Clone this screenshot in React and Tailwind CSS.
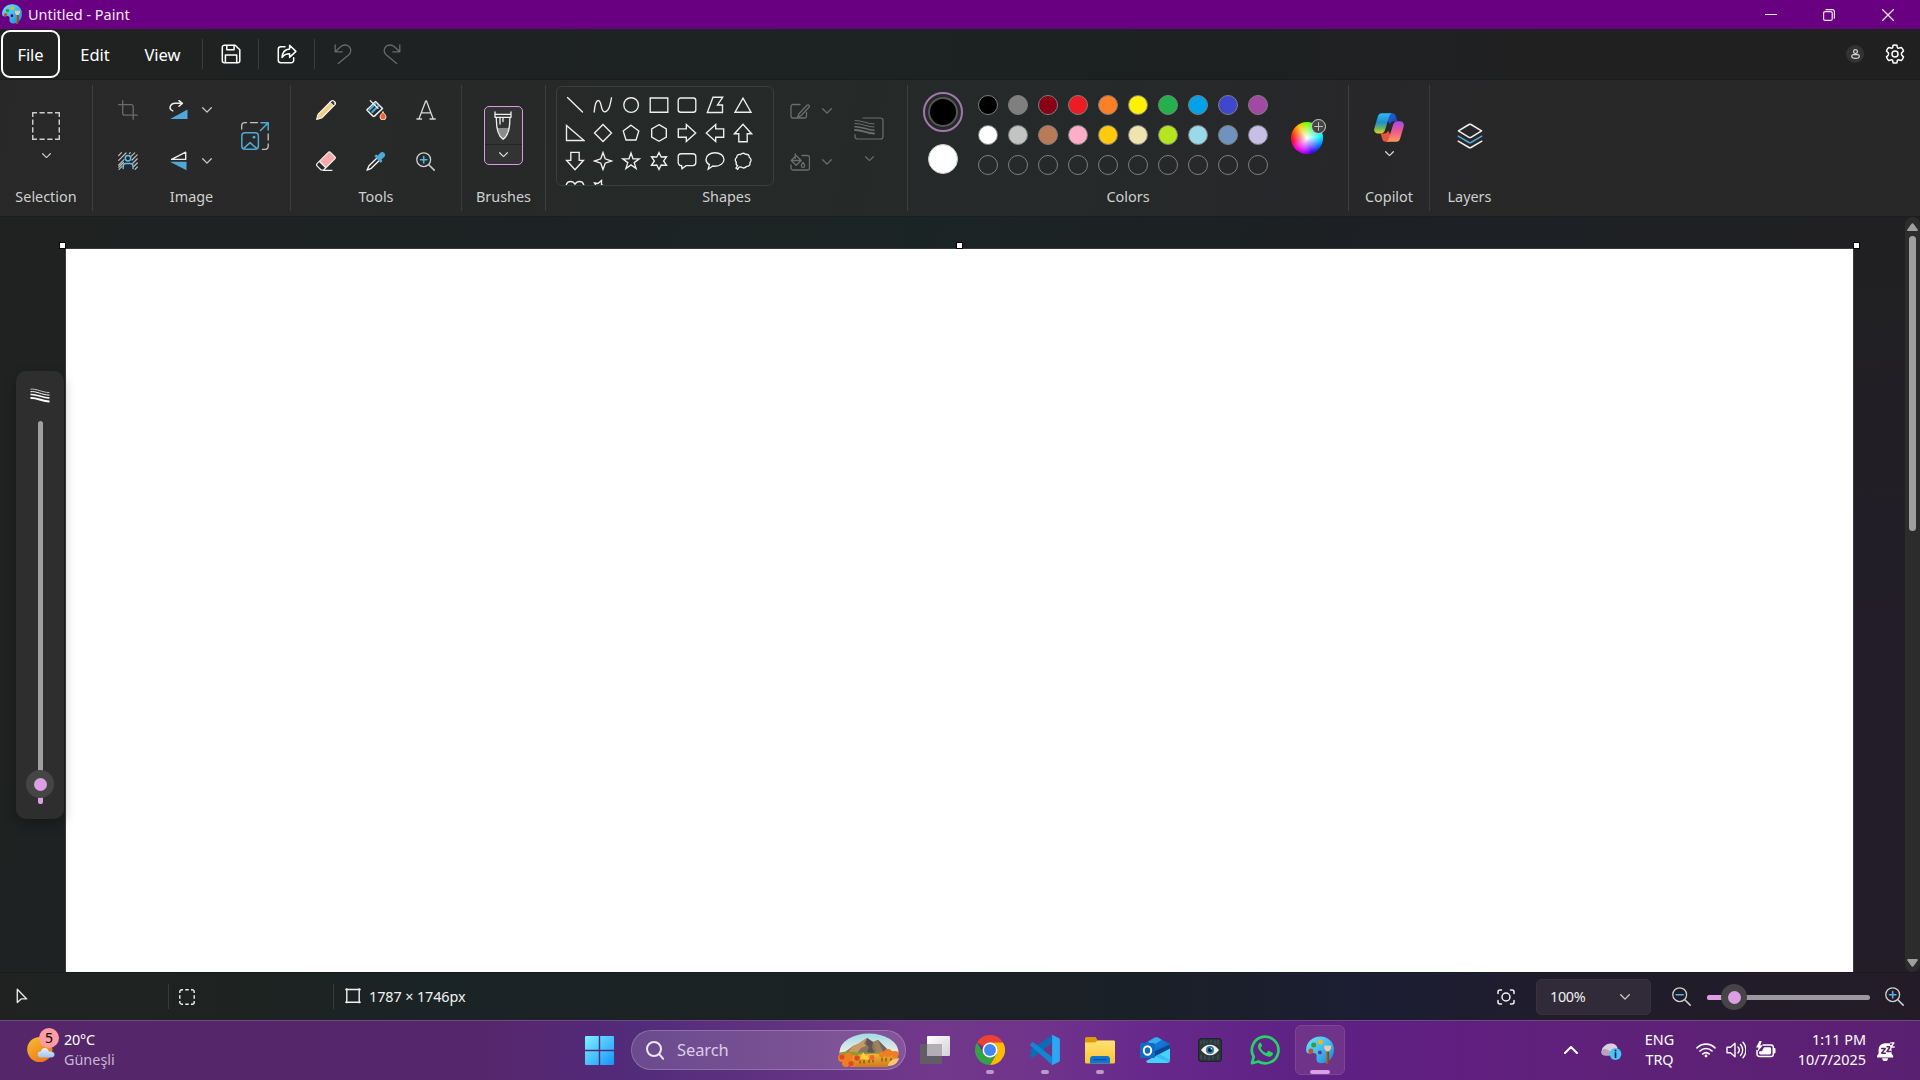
import React from "react";

const Svg = ({ w = 20, h = w, vb, className = "", children, ...p }) => (
  <svg width={w} height={h} viewBox={vb || `0 0 ${w} ${h}`} fill="none" stroke="currentColor" strokeWidth="1.3" strokeLinecap="round" strokeLinejoin="round" className={"block shrink-0 " + className} {...p}>
    {children}
  </svg>
);

const BLUE = "#4fa9d8";

const Chevron = ({ w = 10, className = "" }) => (
  <Svg w={w} h={w * 0.6} vb="0 0 10 6" className={className}><path d="M.7 .8 5 5.1 9.3 .8" /></Svg>
);

const PaintLogo = ({ w }) => (
  <Svg w={w} vb="0 0 28 28" stroke="none">
    <defs>
      <linearGradient id={"pal" + w} x1="0" y1="0" x2="1" y2="1"><stop offset="0" stopColor="#6fe6fc" /><stop offset=".5" stopColor="#3fbdf0" /><stop offset="1" stopColor="#1c7fd8" /></linearGradient>
      <linearGradient id={"brh" + w} x1="0" y1="0" x2="1" y2="0"><stop offset="0" stopColor="#b96a21" /><stop offset="1" stopColor="#7c3f10" /></linearGradient>
    </defs>
    <path d="M14.500 .5C6.500 .5 .3 6.300 .1 13.700c-.1 3.300 2.200 4.300 5 3.600 3.500-.9 6.200-.2 5.500 3.500-.7 3.800.6 6.500 4.600 6.500C22.500 27.300 28 21.500 28 13.500 28 6 22 .5 14.500.5Zm-.6 14a2 2 0 1 1 0 4 2 2 0 0 1 0-4Z" fill={"url(#pal" + w + ")"} fillRule="evenodd" />
    <circle cx="4.900" cy="15" r="2.500" fill="#c8512b" /><circle cx="7.700" cy="9" r="2.500" fill="#3f9c35" /><circle cx="14.500" cy="6" r="2.500" fill="#f4b51c" />
    <path d="M20.200 15h2.900v12.200a1.450 1.450 0 0 1-2.900 0Z" fill={"url(#brh" + w + ")"} />
    <path d="M18.200 9.500h6.900v2.900l-1.600 2.200h-3.700l-1.600-2.200Z" fill="#e8cba0" /><path d="M19.800 13.300h3.700v2h-3.700Z" fill="#cfd3d8" />
  </Svg>
);

const Save = () => (
  <Svg w={20} strokeWidth="1.500"><path d="M3.500 1.200h10.700l4.600 4.500v11a2 2 0 0 1-2 2H3.300a2 2 0 0 1-2-2V3.300a2 2 0 0 1 2.200-2.100Z" /><path d="M5.800 1.500v4.300h7.300V1.500M4.400 18.500v-7.400h11.300v7.400" /></Svg>
);
const Share = () => (
  <Svg w={20} strokeWidth="1.500"><path d="M8 2.800H3.800a2.500 2.500 0 0 0-2.500 2.500v10.900a2.500 2.500 0 0 0 2.500 2.500h10.400a2.500 2.500 0 0 0 2.500-2.500v-2.500" /><path d="M12.600 1.300v3.600C8 5.200 5.300 8.200 5 13.600c1.900-2.700 4.300-3.800 7.600-3.800v3.600l6.300-6Z" /></Svg>
);
const Undo = ({ className = "" }) => (
  <Svg w={18} h={20} className={className} strokeWidth="1.300"><path d="M1.200 .8v7h7M1.500 7.500 6 3.200c2.800-2.700 6.700-2.900 9-.7 2.400 2.300 2.500 5.600-.1 8.200L4.300 19.500" /></Svg>
);
const Gear = () => (
  <Svg w={20} strokeWidth="1.500">
    <circle cx="10" cy="10" r="3" />
    <path d="M8.100 1.200Q10 .7 11.900 1.200L12.300 3.300Q12.800 4.300 14 4.100L16.400 3.500Q17.900 5 18.500 7L16.800 8.700Q16.100 10 16.800 11.200L18.500 12.900Q17.900 15 16.400 16.500L14 15.900Q12.800 15.700 12.300 16.700L11.900 18.800Q10 19.300 8.100 18.800L7.700 16.700Q7.200 15.700 6 15.900L3.600 16.500Q2.100 15 1.500 12.900L3.200 11.200Q3.900 10 3.200 8.700L1.500 7Q2.100 5 3.600 3.500L6 4.100Q7.200 4.300 7.700 3.300Z" />
  </Svg>
);

const Crop = () => <Svg w={20} className="text-[#6b6b6b]"><path d="M4.700 .7v12.500a2 2 0 0 0 2 2h12.600M.7 4.700h12.500a2 2 0 0 1 2 2v12.600" /></Svg>;
const Rotate = () => (
  <Svg w={20} className="text-[#ececec]"><path d="M1 7.800C1.300 5 3.500 3.300 6.500 3.300h6.300M10 .6l3.300 2.800L10 6.300M1 8c.3 1.500 1.300 2.500 2.800 2.900" strokeWidth="1.500" /><path d="M18.500 9.500v9.500H1.200Z" fill={BLUE} stroke="none" /></Svg>
);
const Flip = () => (
  <Svg w={20} className="text-[#ececec]"><path d="M16.700 1.200v7.200H2.600Z" strokeWidth="1.400" /><path d="M17.500 10.700v8.600L.8 10.700Z" fill={BLUE} stroke="none" /></Svg>
);
const RemoveBg = () => (
  <Svg w={20} className="text-[#bdbdbd]" strokeWidth="1.200">
    <path d="M.7 4.500 3.500 1.700M.7 9.300 8 2M.7 14 6 8.700M1 18.300 4 15.300M.7 16.200 5.500 11.500M11.500 2.500 12.300 1.700M12.800 5.700 16.700 1.800M14 9 19.200 3.800M14.800 12.200 19.300 7.800M15.700 15.500 19.300 12M17 18.300 19.300 16" />
    <circle cx="10" cy="7.300" r="2.700" stroke="#62bdea" strokeWidth="1.500" /><path d="M5.200 17.500v-2.300a2.600 2.600 0 0 1 2.600-2.600h4.600a2.600 2.600 0 0 1 2.600 2.600v2.300" stroke="#62bdea" strokeWidth="1.500" />
  </Svg>
);
const Resize = () => (
  <Svg w={28} className="text-[#c4c4c4]" strokeWidth="1.300">
    <path d="M.7 7V3.500A2.800 2.800 0 0 1 3.500.7h2M9.500.7h7M27.200 12v6M27.200 22v2.500a2.800 2.800 0 0 1-2.800 2.800h-3" />
    <g stroke={BLUE} strokeWidth="1.500"><path d="M20 .8h7.200v7.200M27 1 19.500 8.500" /><rect x=".8" y="10.800" width="16.600" height="16.400" rx="3.200" /><path d="m3.300 25.900 5.800-5.300 5.900 5.300" /></g><circle cx="13" cy="15.200" r="1.400" fill={BLUE} stroke="none" />
  </Svg>
);
const Pencil = () => (
  <Svg w={20} className="text-[#f4f4f4]"><path d="M.8 19.200 2.200 14 14.200 2 18 5.800 6 17.800Z" fill="#f0d080" stroke="none" /><path d="M.6 19.400 2 14.300 14.800 1.500a2.600 2.600 0 0 1 3.700 3.700L5.700 18Z" strokeWidth="1.100" /><path d="m14 2.200 3.800 3.800 1-1.200V2L17 .8Z" fill="#3b3b3b" stroke="#fff" strokeWidth=".9" /></Svg>
);
const Bucket = () => (
  <Svg w={21} h={20} className="text-[#f1f1f1]"><path d="m3.500 7.500 6-6 7 7-8 7.600a1 1 0 0 1-1.500 0L1.300 10.500a1 1 0 0 1 0-1.200Z" strokeWidth="1.500" /><path d="m3.700 9.500 6-6M6.300 12l6-6" stroke={BLUE} strokeWidth="2.300" /><path d="M4.300 .7 12 8.300" strokeWidth="1.200" /><path d="M17 12c1.500 2 3 3.300 3 4.900a3 3 0 0 1-6 0c0-1.600 1.500-2.900 3-4.900Z" fill="#f4622f" stroke="#fff" strokeWidth=".8" /></Svg>
);
const LetterA = () => <Svg w={20} className="text-[#d6d6d6]" strokeWidth="1.300"><path d="M2.900 19 9.700 1h.8L17.200 19M.9 19h4.600M14 19h5.200M5.300 12.800h9.500" /></Svg>;
const Eraser = () => (
  <Svg w={20} className="text-[#f1f1f1]"><path d="M1 12.700 12.300 1.300a1.500 1.500 0 0 1 2.200 0l4.300 4.400a1.500 1.500 0 0 1 0 2.100L7.600 19H5.100L1 14.900a1.500 1.500 0 0 1 0-2.200Z" fill="#f9aaa8" stroke="none" /><path d="M3.200 10.600 9.400 16.900 7.600 19H5.100L1 14.900a1.500 1.500 0 0 1 0-2.200Z" fill="#252626" stroke="none" /><path d="M1 12.700 12.300 1.300a1.500 1.500 0 0 1 2.200 0l4.300 4.400a1.500 1.500 0 0 1 0 2.100L7.600 19H5.100L1 14.900a1.500 1.500 0 0 1 0-2.200ZM3.500 10.500l6.200 6.200M7 19.300h9" strokeWidth="1.200" /></Svg>
);
const Dropper = () => (
  <Svg w={20} className="text-[#f1f1f1]"><path d="M10.500 7.500 3 14.800 1 19.200l4.300-1.900 7.700-7.500" strokeWidth="1.400" /><path d="m8.300 5 2-1.500 1.500 1L14.600 1.400a3 3 0 0 1 4.100 4.100L15.500 8.400l.9 1.600-1.600 1.900Z" fill={BLUE} stroke="none" /></Svg>
);
const Magnifier = ({ sign = "plus", w = 19 }) => (
  <Svg w={w} vb="0 0 19 19" className="text-[#cfcfcf]"><circle cx="7.700" cy="7.700" r="6.900" /><path d="m12.800 12.800 5.400 5.300" strokeWidth="1.500" /><path d={sign === "plus" ? "M7.700 4.500v6.400M4.500 7.700h6.400" : "M4.200 7.700h7"} stroke="#55b3e3" strokeWidth="1.600" /></Svg>
);
const Brush = () => (
  <Svg w={18} h={30} className="text-[#f0f0f0]" strokeWidth="1.300">
    <path d="M3.300 17h11.700c-.8 4.800-2.600 8.800-5.800 10.800-3.300-2-5.100-6-5.900-10.800Z" fill="#8b8b8b" stroke="none" />
    <path d="M1 1v5.300h16V1M1 3.300h16M2.400 6.300c-.3 10.500 1.300 18.200 6.700 22 5.400-3.800 7-11.500 6.700-22M6 6.500v6.500M9 6.500v4" />
  </Svg>
);
const Strokes = ({ className = "" }) => (
  <Svg w={20} h={15} className={className} strokeLinecap="butt"><g><path d="M.5 1.200C6 .3 12 4.500 19.500 4.600" strokeWidth=".7" /><path d="M.5 3.700C6 2.800 12 7 19.500 7.100" strokeWidth="1" /><path d="M.5 6.500c5.500-.9 11.500 3.300 19 3.400" strokeWidth="1.500" /><path d="M.5 10c5.500-.9 11.500 3.300 19 3.400" strokeWidth="2" /></g></Svg>
);

const SHAPES = [
  "M2.500 2.500 17.500 17",
  "M1.200 17C2 8 3.500 5.500 5.200 5.500c4 0 2 11.300 6.300 11.300 4.300 0 5.500-6 7-14",
  "M2.800 10a7.300 7.300 0 1 0 14.600 0 7.300 7.300 0 1 0-14.600 0Z",
  "M1.200 3h17.600v14.200H1.200Z",
  "M3.700 3h12.600a2.500 2.500 0 0 1 2.500 2.500v9.200a2.500 2.500 0 0 1-2.500 2.500H3.700a2.500 2.500 0 0 1-2.500-2.500V5.500A2.500 2.500 0 0 1 3.700 3Z",
  "M8 2.200h9.700L12.500 10h5v7.500H2.300Z",
  "M10 3.200 18 17.200H2Z",
  "M1.500 2.500v15H19Z",
  "M10 1.500 18.500 10 10 18.500 1.500 10Z",
  "M10 2.200 17.800 8 15 17H5L2.200 8Z",
  "M10 1.700 17.300 5.800v8.400L10 18.300 2.700 14.200V5.800Z",
  "M1.300 5.800h8V1.500L18.700 10l-9.400 8.500v-4.300h-8Z",
  "M18.700 5.800h-8V1.500L1.300 10l9.400 8.500v-4.300h8Z",
  "M5.800 18.700v-8H1.500L10 1.300l8.500 9.400h-4.300v8Z",
  "M5.800 1.300v8H1.500L10 18.700l8.500-9.400h-4.300v-8Z",
  "M10 1.500 12.200 7.800 18.500 10 12.200 12.200 10 18.500 7.800 12.200 1.500 10 7.800 7.800Z",
  "M10 2 12 7.800 18.200 7.900 13.200 11.600 15.100 17.500 10 13.900 4.900 17.500 6.800 11.600 1.800 7.900 8 7.800Z",
  "M10 1.500 12.200 6 17.500 5.800 14.600 10 17.500 14.300 12.200 14 10 18.500 7.800 14 2.500 14.300 5.400 10 2.500 5.800 7.800 6Z",
  "M4.200 2.700h11.600a3 3 0 0 1 3 3v5.900a3 3 0 0 1-3 3H9L5 17.800l-.4-3.200a3 3 0 0 1-3.400-3V5.700a3 3 0 0 1 3-3Z",
  "M10 1.700c5 0 9 2.900 9 6.700s-4 6.800-9 6.800c-.8 0-1.500 0-2.200-.2L3.200 18.200l1.200-4.500C2.300 12.500 1 10.600 1 8.400c0-3.800 4-6.700 9-6.700Z",
  "M7.500 3.500Q10 1 12.500 3.300 16.300 3 16.300 6.300 19.500 8.800 17 11.500 17.500 15.300 13.800 15.300 11 18.300 8 16L6 16.200 4.700 18.300 3 17 4.500 14.800Q2.500 13.500 3.300 11.300 1 8.500 3.700 6.500 3.800 3 7.500 3.500Z",
  "M10 18 2.700 11C-.5 7 1.700 2.500 5.400 2.500c2 0 3.600 1 4.600 2.700 1-1.700 2.600-2.700 4.600-2.700 3.700 0 5.900 4.500 2.700 8.500Z",
  "M8.500 1.500V6L12 7l-1 3 7 8-9-5-2.500-3L6 11 1.500 4 5 4.500Z",
];

const PALETTE = [
  ["bg-[#000000]", "bg-[#7f7f7f]", "bg-[#880015]", "bg-[#ed1c24]", "bg-[#ff7f27]", "bg-[#fff200]", "bg-[#22b14c]", "bg-[#00a2e8]", "bg-[#3f48cc]", "bg-[#a349a4]"],
  ["bg-[#ffffff]", "bg-[#c3c3c3]", "bg-[#b97a57]", "bg-[#ffaec9]", "bg-[#ffc90e]", "bg-[#efe4b0]", "bg-[#b5e61d]", "bg-[#99d9ea]", "bg-[#7092be]", "bg-[#c8bfe7]"],
  Array(10).fill("bg-transparent"),
];

const Section = ({ className = "", label, children, last }) => (
  <div className={"mt-[5px] flex h-[126px] shrink-0 flex-col " + (last ? "" : "border-r border-[#3c3e3e] ") + className}>
    <div className="flex h-[102px] w-full">{children}</div>
    <div className="flex h-5 items-center justify-center text-[14.400px] leading-5 text-[#cfd0d0]">{label}</div>
  </div>
);

const Cell = ({ className = "", children }) => <div className={"flex h-[50px] shrink-0 items-center justify-center " + className}>{children}</div>;

const TitleBar = () => (
  <header className="flex h-[29px] items-center bg-[#690081] text-[#f4eaf6]">
    <div className="-mt-px ml-[2px]"><PaintLogo w={20} /></div>
    <span className="-mt-px ml-[6px] text-[14.500px] leading-5">Untitled - Paint</span>
    <div className="ml-auto flex h-[28px] items-center">
      <div className="flex w-[58px] justify-center"><Svg w={12} strokeWidth="1"><path d="M0 5.500h12" /></Svg></div>
      <div className="flex w-[58px] justify-center"><Svg w={12} strokeWidth="1.200"><rect x=".6" y="2.600" width="8.600" height="8.800" rx="1.500" /><path d="M3 .6h6.400a2 2 0 0 1 2 2v6.600" /></Svg></div>
      <div className="mr-[3px] flex w-[59px] justify-center"><Svg w={12} strokeWidth="1.200"><path d="M.5.500l11 11M11.500.500l-11 11" /></Svg></div>
    </div>
  </header>
);

const MenuBar = () => (
  <nav className="flex h-[51px] border-b border-[#1a1b1b] bg-[linear-gradient(90deg,#202221_0%,#1e2222_25%,#1c2122_55%,#202021_80%,#202020_100%)] text-white">
    <div className="ml-px mt-px flex h-12 w-[59px] items-center justify-center rounded-[9px] border-2 border-white text-[16.500px] tracking-[-0.1px]"><span className="mt-[3px]">File</span></div>
    <div className="flex w-[70px] items-center justify-center pt-[3px] text-[16.500px]">Edit</div>
    <div className="flex w-[65px] items-center justify-center pt-[3px] text-[16.500px]">View</div>
    <div className="ml-[7px] mt-[10px] flex h-[30px] items-center">
      <div className="h-full w-px bg-[#3a3c3c]" />
      <Cell className="w-[55px]"><Save /></Cell>
      <div className="h-full w-px bg-[#3a3c3c]" />
      <Cell className="w-[55px]"><Share /></Cell>
      <div className="h-full w-px bg-[#3a3c3c]" />
      <Cell className="ml-[3px] w-[49px] text-[#686a6a]"><Undo /></Cell>
      <Cell className="w-[49px] text-[#686a6a]"><Undo className="-scale-x-100" /></Cell>
    </div>
    <div className="ml-auto flex h-[50px] items-center">
      <div className="flex size-[18px] items-center justify-center rounded-full bg-[#333333] text-[#d5d5d5]"><Svg w={9} h={10} strokeWidth="1.200"><circle cx="4.500" cy="2.600" r="1.900" /><path d="M2.300 5.600h4.400a1.600 1.600 0 0 1 1.600 1.600c0 1.200-1.300 2.100-3.800 2.100S.7 8.400.7 7.200a1.600 1.600 0 0 1 1.600-1.600Z" /></Svg></div>
      <div className="ml-[21px] mr-[15px]"><Gear /></div>
    </div>
  </nav>
);

const ShapeGallery = () => (
  <div className="ml-[10px] mt-px h-[100px] w-[218px] shrink-0 overflow-hidden rounded-[6px] border border-[#3b3e3e]">
    <div className="ml-[3.500px] mt-[3.500px] grid w-[196px] grid-cols-[repeat(7,28px)] text-[#efefef]">
      {SHAPES.map((d, i) => <div key={i} className="flex size-7 items-center justify-center"><Svg w={20} strokeWidth="1.350" strokeLinejoin="miter"><path d={d} /></Svg></div>)}
    </div>
  </div>
);

const Ribbon = () => (
  <section className="flex h-[137px] border-b border-[#1c1d1d] bg-[linear-gradient(100deg,#282828_0%,#282928_14%,#262928_28%,#252a29_45%,#26292a_58%,#27272a_70%,#282828_82%)]">
    <Section className="w-[93px]" label="Selection">
      <div className="flex w-full flex-col items-center pt-[27px] text-[#cccccc]">
        <Svg w={28} strokeWidth="1.500" strokeLinecap="butt"><path d="M.7 5V.7H5M23 .7h4.300V5M27.300 23v4.300H23M5 27.300H.7V23M7.500.7h5.200M15.300.7h5.200M7.500 27.300h5.200M15.300 27.300h5.200M.7 7.500v5.200M.7 15.300v5.200M27.300 7.500v5.200M27.300 15.300v5.200" /></Svg>
        <Chevron w={9} className="mt-[13px]" />
      </div>
    </Section>
    <Section className="w-[198px]" label="Image">
      <div className="ml-[10px] grid shrink-0 grid-cols-[56px_40px_15px] text-[#c8c8c8]">
        <Cell className="w-[50px]"><Crop /></Cell><Cell><Rotate /></Cell><Cell><Chevron /></Cell>
        <Cell className="w-[50px]"><RemoveBg /></Cell><Cell><Flip /></Cell><Cell><Chevron /></Cell>
      </div>
      <div className="ml-[27px] flex h-[102px] items-center"><Resize /></div>
    </Section>
    <Section className="w-[171px]" label="Tools">
      <div className="ml-[10px] grid grid-cols-[50px_50px_49px]">
        <Cell><Pencil /></Cell><Cell><Bucket /></Cell><Cell><LetterA /></Cell>
        <Cell><Eraser /></Cell><Cell><Dropper /></Cell><Cell><Magnifier /></Cell>
      </div>
    </Section>
    <Section className="w-[84px]" label="Brushes">
      <div className="ml-[22px] mt-[21px] flex h-[59px] w-[39px] flex-col items-center rounded-[5px] border border-[#d99ae2] bg-[#323434]">
        <div className="flex h-[38px] w-full justify-center border-b border-[#222424] pr-px pt-[4px]"><Brush /></div>
        <Chevron w={9} className="mr-px mt-[7px] text-[#dddddd]" />
      </div>
    </Section>
    <Section className="w-[362px]" label="Shapes">
      <ShapeGallery />
      <div className="ml-[10px] grid shrink-0 grid-cols-[32px_22px] pt-px text-[#6c6e6e]">
        <Cell><Svg w={20} h={16}><path d="M10 1.500H3A2 2 0 0 0 1 3.500V13a2 2 0 0 0 2 2h11.500a2 2 0 0 0 2-2V9.500" /><path d="M7.500 14.500 9 10.700 17 2.300a1.400 1.400 0 0 1 2 2L11 12.700Z" /></Svg></Cell>
        <Cell><Chevron /></Cell>
        <Cell><Svg w={20} h={18}><path d="M12 2.500h5.500a2 2 0 0 1 2 2V15a2 2 0 0 1-2 2H3a2 2 0 0 1-2-2v-3" /><path d="m1.200 7.500 5-5 5 5-5 4.800ZM5.200.8v4.500M3 7.500h7M13 9.500c1.200 1.500 1.700 2.200 1.700 3.200a1.700 1.700 0 0 1-3.400 0c0-1 .5-1.700 1.700-3.200Z" /></Svg></Cell>
        <Cell><Chevron /></Cell>
      </div>
      <div className="ml-[14px] flex w-[34px] flex-col items-center pt-[32px] text-[#6c6e6e]">
        <Svg w={30} h={23} strokeWidth="1.200"><path d="M9 1h17.500A2.500 2.500 0 0 1 29 3.500v16a2.500 2.500 0 0 1-2.500 2.500h-23A2.500 2.500 0 0 1 1 19.500v-2" /><path d="M1 3.500c6-.5 12 3.500 19 3.500M1 6.500c6-.5 12 3.500 19 3.500" strokeWidth="1" /><path d="M1 9.700c6-.5 12 3.500 19 3.500" strokeWidth="1.500" /><path d="M1 13c6-.5 12 3.500 19 3.500" strokeWidth="1.900" /></Svg>
        <Chevron w={9} className="mt-[16px]" />
      </div>
    </Section>
    <Section className="w-[441px]" label="Colors">
      <div className="ml-[15px] flex w-10 flex-col items-center pt-[7px]">
        <div className="flex size-10 items-center justify-center rounded-full border-2 border-[#a078ab]"><div className="size-[30px] rounded-full border-2 border-[#555656] bg-black" /></div>
        <div className="mt-[12px] size-[30px] rounded-full border border-[#c8c8c8] bg-white" />
      </div>
      <div className="ml-[15px] flex flex-col gap-[10px] pt-[10px]">
        {PALETTE.map((row, r) => <div key={r} className="flex gap-[10px]">{row.map((c, i) => <div key={i} className={"size-5 rounded-full border border-[#7c7e7e] " + c} />)}</div>)}
      </div>
      <div className="relative ml-[23px] mt-[37px] size-[32px] rounded-full bg-[radial-gradient(circle,#ffffff_0%,rgba(255,255,255,0.6)_25%,rgba(255,255,255,0)_65%),conic-gradient(from_0deg,#7dff00,#00ff66_45deg,#00ffff_80deg,#0066ff_125deg,#4a00ff_160deg,#c800ff_195deg,#ff00c8_230deg,#ff0040_260deg,#ff3000_285deg,#ffc000_325deg,#7dff00)]">
        <div className="absolute -top-[3px] left-[20px] flex size-[15px] items-center justify-center rounded-full border border-[#d0d0d0] bg-[#444646] text-[#c0c0c0]"><Svg w={9} strokeWidth="1"><path d="M4.500.500v8M.500 4.500h8" /></Svg></div>
      </div>
    </Section>
    <Section className="w-[81px]" label="Copilot">
      <div className="flex w-full flex-col items-center pt-[28px] text-[#e0e0e0]">
        <Svg w={30} h={29} stroke="none" vb="0 0 30 29">
          <defs>
            <linearGradient id="cpa" x1="0" y1="0" x2="0" y2="1"><stop offset="0" stopColor="#35b8f5" /><stop offset=".45" stopColor="#1e8fd0" /><stop offset=".75" stopColor="#6bb860" /><stop offset="1" stopColor="#f0cf1c" /></linearGradient>
            <linearGradient id="cpb" x1="0" y1="0" x2="0" y2="1"><stop offset="0" stopColor="#a348ee" /><stop offset=".5" stopColor="#ee5a8c" /><stop offset="1" stopColor="#fb9a5a" /></linearGradient>
            <linearGradient id="cpc" x1="0" y1="0" x2="1" y2="1"><stop offset="0" stopColor="#1f66d6" /><stop offset="1" stopColor="#2440b4" /></linearGradient>
          </defs>
          <path d="M15 .3h3.300c2 0 3.100 1.400 3.700 3.300l1.300 4.700h-3.800c-2 0-3 1-3.600 3L13 6Z" fill="url(#cpc)" />
          <path d="M15 28.700h-3.300c-2 0-3-1.200-3.600-3.300L6.700 20.500h3.600c2 0 3.200-1 3.800-3L17 23Z" fill="#e8553c" />
          <path d="M7.700.3h10.200c-1.600.4-2.300 1.800-2.900 3.700l-4 13c-.7 2.300-2 3.500-4.400 3.500H4.100C.8 20.500-.4 18 .4 15.200L3.600 4.300C4.300 1.800 5.400.3 7.700.3Z" fill="url(#cpa)" />
          <path d="M22.300 28.700H12.100c1.600-.4 2.300-1.800 2.900-3.700l4-13c.7-2.300 2-3.700 4.400-3.700h2.500c3.300 0 4.500 2.700 3.700 5.500l-3.200 10.900c-.7 2.500-1.800 4-4.100 4Z" fill="url(#cpb)" />
        </Svg>
        <Chevron w={9} className="mt-[9px]" />
      </div>
    </Section>
    <Section className="w-[79px]" label="Layers" last>
      <div className="flex w-full justify-center pt-[38px]"><Svg w={26} strokeWidth="1.500" className="text-[#f0f0f0]"><path d="M12 1.500a2 2 0 0 1 2 0l10.600 6.400L14 14.300a2 2 0 0 1-2 0L1.400 7.900Z" /><path d="m1.200 13.200 10.800 6.300a2 2 0 0 0 2 0l10.800-6.300" stroke={BLUE} /><path d="m1.200 18.200 10.800 6.300a2 2 0 0 0 2 0l10.800-6.300" /></Svg></div>
    </Section>
  </section>
);

const Handle = ({ className }) => <div className={"absolute size-[7px] border border-black bg-white " + className} />;

const Workspace = () => (
  <main className="flex h-[755px] bg-[radial-gradient(600px_720px_at_100%_100%,#231d2a_0%,#221d29_45%,transparent_100%),linear-gradient(100deg,#202221_0%,#1d2223_20%,#1b2424_45%,#1c2023_62%,#1d2024_75%,#202022_90%,#202020_100%)]">
    <div className="relative flex w-[1905px] pl-[65px] pt-[31px]">
      <div className="w-[1789px] border border-b-0 border-[#3a3a3a] bg-white" />
      <Handle className="left-[59px] top-[25px]" />
      <Handle className="left-[956px] top-[25px]" />
      <Handle className="left-[1853px] top-[25px]" />
      <aside className="absolute left-[16px] top-[154px] flex h-[448px] w-12 flex-col items-center rounded-[10px] bg-[#2e2e2e] shadow-[0_5px_12px_rgba(0,0,0,0.28)]">
        <Strokes className="mt-[17px] text-white" />
        <div className="relative ml-px mt-[18px] flex h-[383px] w-[5px] flex-col">
          <div className="grow rounded-t-full bg-[#9f9f9f]" />
          <div className="h-[18px] rounded-b-[2px] bg-[#dc9ee5]" />
          <div className="absolute -left-[12px] bottom-[6px] flex size-7 items-center justify-center rounded-full bg-[#454545]"><div className="size-[13px] rounded-full bg-[#dc9ee5]" /></div>
        </div>
      </aside>
    </div>
    <div className="flex w-[15px] flex-col items-center rounded-t-[8px] rounded-b-[8px] bg-[#2c2c2c] text-[#9f9f9f]">
      <Svg w={11} h={8} className="mt-[6px]" stroke="none"><path d="M4.300 1a1.400 1.400 0 0 1 2.400 0l3.900 5.500a.9.900 0 0 1-.7 1.500H1.100a.9.900 0 0 1-.7-1.500Z" fill="currentColor" /></Svg>
      <div className="mt-[5px] h-[295px] w-[7px] rounded-full bg-[#9f9f9f]" />
      <Svg w={11} h={8} className="mb-[5px] mt-auto rotate-180" stroke="none"><path d="M4.300 1a1.400 1.400 0 0 1 2.400 0l3.900 5.500a.9.900 0 0 1-.7 1.500H1.100a.9.900 0 0 1-.7-1.500Z" fill="currentColor" /></Svg>
    </div>
  </main>
);

const StatusBar = () => (
  <footer className="flex h-[48px] items-center border-t border-[#1a1c1c] bg-[linear-gradient(90deg,#1f2221_0%,#1e2321_12%,#1a2325_22%,#1b2224_45%,#1a2028_60%,#1c1d33_72%,#201c2b_82%,#231c28_100%)] text-[14.400px] text-[#f2f2f2]">
    <div className="flex w-[168px] items-center pl-[16px]"><Svg w={12} h={17} className="text-[#e6e6e6]"><path d="M1.300 1.200v13.300l3.800-3.600h5.600Z" strokeWidth="1.400" /></Svg></div>
    <div className="h-[25px] w-px bg-[#383b3b]" />
    <div className="flex w-[164px] pl-[10px]"><Svg w={16} strokeWidth="1.400" strokeLinecap="butt"><path d="M.8 4V2.800a2 2 0 0 1 2-2H4M12 .8h1.200a2 2 0 0 1 2 2V4M15.200 12v1.200a2 2 0 0 1-2 2H12M4 15.200H2.800a2 2 0 0 1-2-2V12M6.300.8h3.400M6.300 15.200h3.400M.8 6.300v3.400M15.200 6.300v3.400" /></Svg></div>
    <div className="h-[25px] w-px bg-[#383b3b]" />
    <div className="flex items-center pl-[11px]"><Svg w={16} strokeWidth="1.400" strokeLinecap="butt"><path d="M1.800 .3v15M14.200 .3v15M.3 1.500h15.400M.3 14.200h15.400" /></Svg><span className="ml-[8px] mt-px tracking-[-0.1px]">1787 × 1746px</span></div>
    <div className="ml-auto flex items-center">
      <Svg w={18} h={16} strokeWidth="1.500"><path d="M1 4.500V3a2 2 0 0 1 2-2h1.500M13.500 1H15a2 2 0 0 1 2 2v1.500M17 11.500V13a2 2 0 0 1-2 2h-1.500M4.500 15H3a2 2 0 0 1-2-2v-1.500" /><circle cx="9" cy="8" r="4" /></Svg>
      <div className="ml-[21px] flex h-9 w-[115px] items-center rounded-[5px] border border-[#383240] bg-[#302a39] pl-[13px] pr-[20px]"><span className="tracking-[-0.3px]">100%</span><Chevron w={10} className="ml-auto text-[#cfcfcf]" /></div>
      <div className="-mt-px ml-[21px]"><Magnifier sign="minus" /></div>
      <div className="relative ml-[16px] mt-[2px] flex h-[5px] w-[163px] overflow-visible rounded-full bg-[#9c98a0]">
        <div className="h-full w-7 rounded-l-full bg-[#dc9ee5]" />
        <div className="absolute -top-[11px] left-[14px] flex size-[26px] items-center justify-center rounded-full bg-[#454545]"><div className="size-[13px] rounded-full bg-[#dc9ee5]" /></div>
      </div>
      <div className="-mt-px ml-[15px] mr-[16px]"><Magnifier /></div>
    </div>
  </footer>
);

const Task = ({ children, dot, active }) => (
  <div className="flex w-[55px] justify-center">
    <div className={"relative flex size-[50px] items-center justify-center rounded-[6px] " + (active ? "border border-[#7d4598] bg-[#6f3389]" : "")}>
      {children}
      {dot && <div className="absolute bottom-px left-[21px] h-1 w-2 rounded-full bg-[#b89bc8]" />}
      {active && <div className="absolute bottom-0 left-[14px] h-1 w-5 rounded-full bg-[#dc9ee5]" />}
    </div>
  </div>
);

const Landscape = () => (
  <Svg w={62} h={34} stroke="none">
    <defs>
      <linearGradient id="sky" x1="0" y1="0" x2="0" y2="1"><stop offset="0" stopColor="#9edbe6" /><stop offset=".6" stopColor="#f3eee4" /></linearGradient>
      <linearGradient id="hill" x1="0" y1="0" x2="0" y2="1"><stop offset="0" stopColor="#f0b339" /><stop offset="1" stopColor="#cf7a16" /></linearGradient>
      <clipPath id="ov"><ellipse cx="31" cy="19" rx="29.500" ry="18.500" /></clipPath>
    </defs>
    <g clipPath="url(#ov)">
      <rect width="62" height="34" fill="url(#sky)" />
      <path d="M7 19 15 13l5-2 9-6 6 4 5-2 9 9 8 4-10 2H10Z" fill="#8b7460" />
      <path d="m15 13 5-2 9-6-3 5 2 3-5 2-4 5-9-1Z" fill="#c79a62" /><path d="m29 5-1 6 3 3-2 5 8 1-3-5 1-6Z" fill="#5f5654" /><path d="m35 9 5-2 4 5 3 7-8 1-2-5Z" fill="#a07f5c" /><path d="m40 7 9 9 6 3-9 1-3-6Z" fill="#6b6663" />
      <path d="M0 20c10-3 18-1 26 0s20-3 36-1v15H0Z" fill="#8d9a35" /><path d="M10 24c16-4 32-4 52-1v11H8Z" fill="url(#hill)" />
      <path d="M22 28v2M26 27v3M31 26.500v3M35 27v2M44 25v3M48 25v3M53 25v3" stroke="#71451b" strokeWidth="1.100" />
    </g>
    <g fill="#ef7d24"><circle cx="4" cy="25" r="4" /><circle cx="11" cy="24" r="4.200" /><circle cx="8" cy="30" r="4" /><circle cx="15" cy="31" r="3" /><circle cx="50" cy="20" r="4" /><circle cx="44" cy="21.500" r="3" /><circle cx="57" cy="21.500" r="3.500" /></g>
    <circle cx="4" cy="24" r="2.500" fill="#d94a24" /><circle cx="19" cy="25" r="2.800" fill="#e04a23" /><circle cx="13" cy="30.500" r="2.600" fill="#dd4d1f" /><path d="m22 26 3-7 3 4 2-1 1 5Z" fill="#ffcf35" /><path d="M50 33c0-5 5-7 11-8-1 5-5 8-11 8Z" fill="#ffc66d" /><circle cx="34" cy="24.500" r="2.400" fill="#f0642b" />
  </Svg>
);

const Taskbar = () => (
  <div className="flex h-[60px] border-t border-[#6d4a80] bg-[linear-gradient(90deg,#55266a_0%,#56266c_25%,#522b7b_33%,#5c307f_38%,#71388a_48%,#70348c_54%,#65278a_61%,#5e2184_68%,#601f7f_76%,#5e2179_84%,#5a2070_100%)] text-[14.400px] text-white">
    <div className="flex w-[576px] pl-[27px]">
      <div className="relative h-[60px] w-[30px] pt-[15px]">
        <Svg w={28} h={27} stroke="none"><defs><linearGradient id="sun" x1="0" y1="0" x2=".6" y2="1"><stop offset="0" stopColor="#f6c22f" /><stop offset="1" stopColor="#f07818" /></linearGradient><linearGradient id="cld" x1="0" y1="0" x2="0" y2="1"><stop offset="0" stopColor="#e6f2ff" /><stop offset="1" stopColor="#9fc3ee" /></linearGradient></defs><circle cx="12.800" cy="13.500" r="12.600" fill="url(#sun)" /><path d="M13.500 21.500a3 3 0 0 1 .3-6c.7-2.500 2-3.500 4-3.500 2.200 0 3.500 1.200 4 3.500 3 0 5.700.7 5.700 3 0 2-1.500 3-3.500 3Z" fill="url(#cld)" /></Svg>
        <div className="absolute left-[12px] top-[7px] flex size-[20px] items-center justify-center rounded-full bg-[#ff9ba2] text-[14px] leading-none text-black">5</div>
      </div>
      <div className="ml-[7px] pt-[9px] leading-5"><div className="tracking-[-0.2px]">20°C</div><div className="text-[#c9b5d3]">Güneşli</div></div>
    </div>
    <div className="flex grow pt-[4px]">
      <div className="flex h-[50px] w-[46px] items-center justify-center">
        <Svg w={29} stroke="none"><defs><linearGradient id="win" x1="0" y1="0" x2="29" y2="29" gradientUnits="userSpaceOnUse"><stop stopColor="#7ff0ff" /><stop offset="1" stopColor="#1594fb" /></linearGradient></defs><path d="M1 0h12.800v13.800H0V1a1 1 0 0 1 1-1ZM15.200 0H28a1 1 0 0 1 1 1v12.800H15.200ZM0 15.200h13.800V29H1a1 1 0 0 1-1-1ZM15.200 15.200H29V28a1 1 0 0 1-1 1H15.200Z" fill="url(#win)" /></Svg>
      </div>
      <div className="ml-[9px] mt-[5px] flex h-10 w-[275px] items-center rounded-full border border-white/20 bg-white/15 pl-[14px]">
        <Svg w={18} h={19} className="text-[#efe6f3]" strokeWidth="2"><circle cx="8" cy="8" r="7" /><path d="m13.200 13.200 4 4.600" /></Svg>
        <span className="ml-[13px] mt-px text-[16.500px] tracking-[-0.100px] text-[#dccce4]">Search</span>
        <div className="ml-auto mr-[5px]"><Landscape /></div>
      </div>
      <div className="ml-px flex">
        <Task><Svg w={30} h={28} stroke="none"><defs><linearGradient id="tvw" x1="0" y1="0" x2="1" y2="1"><stop stopColor="#fff" /><stop offset="1" stopColor="#d4d0d8" /></linearGradient></defs><rect y="8" width="22" height="20" rx="1" fill="#625c66" /><rect x="7" y="0" width="23" height="20" rx="1" fill="url(#tvw)" /><path d="M7 8h15v12H7Z" fill="#b3aeb6" /></Svg></Task>
        <Task dot><Svg w={30} stroke="none" vb="0 0 48 48"><path d="M24 24 3.200 12A24 24 0 0 1 44.800 12H24Z" fill="#ea4335" /><path d="M24 12h20.800A24 24 0 0 1 24 48l10.400-18Z" fill="#fbbc04" /><path d="M3.200 12A24 24 0 0 0 24 48l10.400-18-20.800 0Z" fill="#34a048" /><circle cx="24" cy="24" r="12" fill="#fff" /><circle cx="24" cy="24" r="9.500" fill="#4285f4" /></Svg></Task>
        <Task dot><Svg w={30} stroke="none"><path d="M22 0 5.300 16.200 2.400 18.400a1.200 1.200 0 0 1-1.600 0L.4 16.500a1 1 0 0 1 0-1.500Z" fill="#0b6db5" /><path d="M22 7.700 2.700 22.700a1.200 1.200 0 0 1-1.600-.1L.4 21a1 1 0 0 1 0-1.400L21.500.2Z" fill="#0b6db5" /><path d="M.4 9 2 7.500a1.200 1.200 0 0 1 1.600-.1L22 22v7.700L.4 10.600A1 1 0 0 1 .4 9Z" fill="#1187d2" /><path d="M22.500 0 28.700 3a2 2 0 0 1 1.200 1.800v20.400a2 2 0 0 1-1.200 1.800l-6.200 3a1.600 1.600 0 0 1-1.700-.4c.6.6 1.300.2 1.300-.8V1.200c0-1-.7-1.400-1.300-.8A1.600 1.600 0 0 1 22.500 0Z" fill="#2ca7f3" /></Svg></Task>
        <Task dot><Svg w={30} h={27} stroke="none"><defs><linearGradient id="fld" x1="0" y1="0" x2="0" y2="1"><stop stopColor="#ffe173" /><stop offset="1" stopColor="#fcc533" /></linearGradient></defs><path d="M0 1.500A1.500 1.500 0 0 1 1.500 0h9L13 3.800H30V8H0Z" fill="#dd9b08" /><path d="M0 5.500h10l3-2h15.500A1.500 1.500 0 0 1 30 5V25a1.500 1.500 0 0 1-1.500 1.500h-27A1.500 1.500 0 0 1 0 25Z" fill="url(#fld)" /><path d="M5 26.500V22a3 3 0 0 1 3-3h14a3 3 0 0 1 3 3v4.500Z" fill="#0d76cf" /><path d="M9 22.700h12" stroke="#0a4f96" strokeWidth="1.200" /></Svg></Task>
        <Task><Svg w={30} h={26} stroke="none"><path d="m5 6 9-5.300a4 4 0 0 1 4 0L30 7v6L14 18 5 12Z" fill="#1173cf" /><path d="M8 4.500 15 .6a3 3 0 0 1 3 0L22 3 12 9Z" fill="#39adec" /><path d="M12 9 22 3l4 2.200-13 8Z" fill="#1278d6" /><path d="M29.500 7.500 30 12 13 22v-7Z" fill="#0d4596" /><path d="M6 24 30 11.500V23a3 3 0 0 1-3 3H8a3 3 0 0 1-2-2Z" fill="#45d2f7" /><path d="m15 19.500 15 6V23L19 17Z" fill="#2badeb" opacity=".6" /><rect y="6" width="15" height="15" rx="1.500" fill="#0f6cc5" /><ellipse cx="7.500" cy="13.500" rx="3.700" ry="4.200" stroke="#fff" strokeWidth="2" /></Svg></Task>
        <Task><Svg w={24} stroke="none"><rect x=".5" y=".5" width="23" height="23" rx="3.500" fill="#2b383c" stroke="#20242c" /><path d="M3 3v3M6 2v4M9 3v2M13 2v3M17 3v3M20 2v4M3 17v4M7 18v3M11 19v3M15 18v3M20 17v4" stroke="#48585b" strokeWidth="1" /><path d="M3 12c5-7 13-7 18 0-5 7-13 7-18 0Z" fill="#f8efdc" /><circle cx="12" cy="12" r="4" fill="#2779b2" /><circle cx="12" cy="12" r="2" fill="#0d1a24" /><circle cx="13.300" cy="10.700" r=".8" fill="#fff" /></Svg></Task>
        <Task><Svg w={30} stroke="none"><path d="M2 28.200 3.700 21.800A13.300 13.300 0 1 1 8.400 26.500Z" stroke="#25d366" strokeWidth="2.700" /><path d="M10.700 7.500c-.6 0-2.700 1-2.700 3.900 0 1.600.9 3.100 1.600 4 1.800 2.500 4.200 4.800 7.300 5.900 3.500 1.200 5.400-.4 5.800-1.700.3-1.100.2-1.700 0-1.900l-3.700-1.800c-.4-.2-.7 0-.9.200l-1.300 1.700c-.3.300-.6.300-1 .1-2.400-1.100-3.900-2.600-5-4.600-.2-.4-.1-.7.200-1l.9-1.100c.3-.4.2-.7.100-1l-1.100-2.300c-.2-.4-.5-.4-1.200-.4Z" fill="#25d366" /></Svg></Task>
        <Task active><PaintLogo w={28} /></Task>
      </div>
    </div>
    <div className="flex shrink-0">
      <div className="flex h-[58px] w-[28px] items-center justify-center"><Svg w={14} h={8} strokeWidth="2"><path d="m1 7 6-6 6 6" /></Svg></div>
      <div className="flex h-[60px] w-[53px] items-center justify-center"><Svg w={21} h={17} stroke="none"><path d="M5 12.500A5 5 0 0 1 3 3.500C5 1 8 0 11 .5c3 .4 5 2 5.500 4.500L12 12Z" fill="#d9cfe0" /><path d="M3 12.500c-4-1-3.500-6 0-6.500 2-.3 3 .5 5 1.500l6 5Z" fill="#b6a3c0" /><circle cx="14.500" cy="11" r="5.900" fill="#4cc2f7" /><path d="M14.500 9.800v4.500" stroke="#0a2c44" strokeWidth="1.700" /><circle cx="14.500" cy="7.500" r="1" fill="#0a2c44" /></Svg></div>
      <div className="w-[43px] pt-[9px] text-center leading-5"><div>ENG</div><div>TRQ</div></div>
      <div className="ml-[15px] flex h-[58px] items-center gap-[10px]">
        <Svg w={20} h={16} strokeWidth="1.700"><path d="M1 5.800a12.700 12.700 0 0 1 18 0M4 9a8.500 8.500 0 0 1 12 0M6.800 12a4.500 4.500 0 0 1 6.400 0" /><circle cx="10" cy="14" r="1.400" fill="currentColor" stroke="none" /></Svg>
        <Svg w={20} h={18} strokeWidth="1.400"><path d="M1 6.300v5.400h3.500l4.500 4V2.300l-4.500 4ZM12 6a4.500 4.500 0 0 1 0 6M14.500 3.500a8 8 0 0 1 0 11M17 1.300a11.500 11.500 0 0 1 0 15.400" /></Svg>
        <Svg w={20} h={18} strokeWidth="1.500"><path d="M7 4h8a2.300 2.300 0 0 1 2.300 2.300v6.900a2.300 2.300 0 0 1-2.300 2.300H3.300A2.300 2.300 0 0 1 1 13.200V9.500" /><path d="M8 6.200h5.700c.8 0 1.400.6 1.400 1.400v4.400c0 .8-.6 1.400-1.400 1.400H4.500c-.8 0-1.400-.6-1.400-1.400v-1.500L6 10Z" fill="currentColor" stroke="none" /><path d="M18.500 8v3.500" strokeWidth="2" /><path d="M3.500 0 0 6.500h2.500L1.500 11 6.800 4.300H4.200L5.800 0Z" fill="currentColor" stroke="none" /></Svg>
      </div>
      <div className="w-[90px] pt-[9px] text-right leading-5"><div>1:11 PM</div><div>10/7/2025</div></div>
      <div className="ml-[11px] mr-[26px] flex h-[60px] w-[17px] items-center"><Svg w={18} h={19} stroke="none"><path d="M0 15.500v-1.400l1.600-2.600V7.500A6.400 6.400 0 0 1 8 1.200h6.500v10.300L16.200 14v1.500ZM5.200 16.300h5.800a2.900 2.900 0 0 1-5.800 0Z" fill="#fff" /><path d="M4.600 6.500h3.600L4.600 11.200h3.800" stroke="#5a2070" strokeWidth="1.500" /><path d="M10 4.800h3.300L10 9.500h3.600" stroke="#5a2070" strokeWidth="1.500" /><path d="M13 .6h4.600V6H15v-3h-2Z" fill="#5a2070" /><path d="M13.700 .9h3.300L13.700 5h3.500" stroke="#fff" strokeWidth="1.400" /></Svg></div>
    </div>
  </div>
);

export default function App() {
  return (
    <div className="flex h-[1080px] w-[1920px] flex-col overflow-hidden bg-[#202020] font-['Noto_Sans','Open_Sans',sans-serif]">
      <TitleBar />
      <MenuBar />
      <Ribbon />
      <Workspace />
      <StatusBar />
      <Taskbar />
    </div>
  );
}
